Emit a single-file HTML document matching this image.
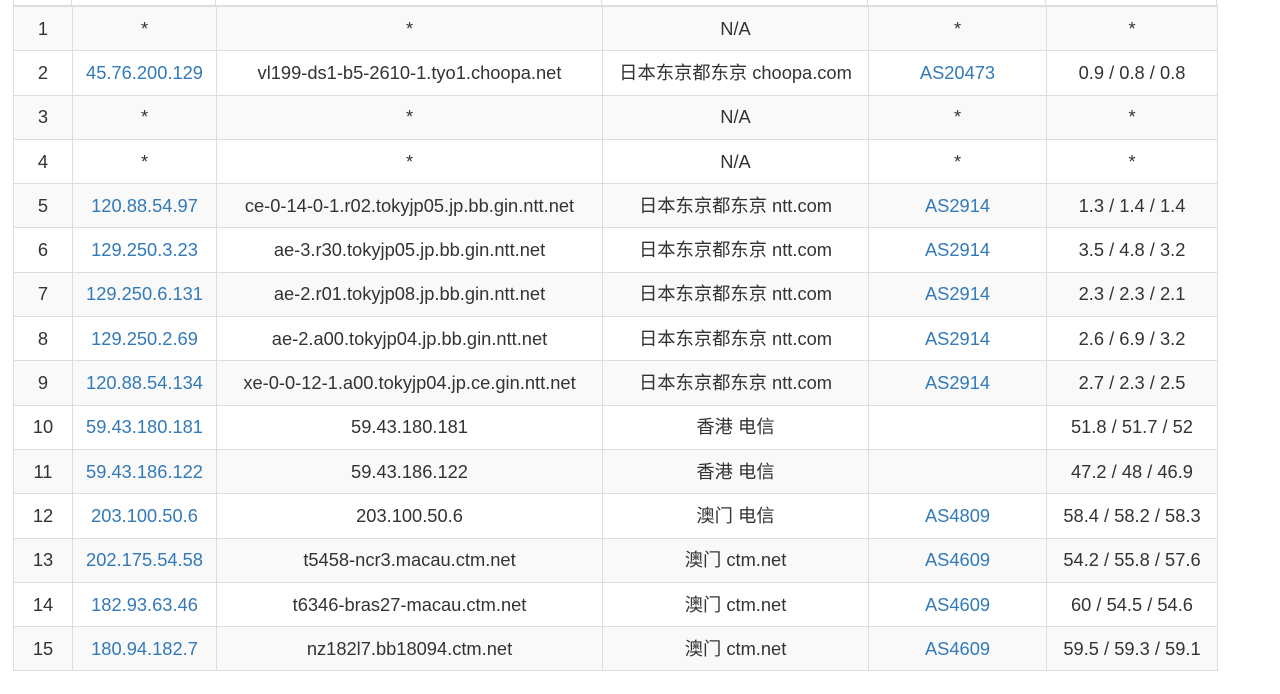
<!DOCTYPE html>
<html><head><meta charset="utf-8"><style>
html,body{margin:0;padding:0;background:#fff;width:1280px;height:694px;overflow:hidden}
table{position:absolute;left:13px;top:5px;border-collapse:collapse;border-top:2px solid #ddd;font-family:"Liberation Sans","Noto Sans CJK SC",sans-serif;font-size:18.3px;color:#333}
td{border:1px solid #ddd;text-align:center;padding:0;height:43.3px;line-height:20px}
tr:nth-child(odd) td{background:#f9f9f9}
.l{color:#337ab7}
</style></head><body>
<table>
<colgroup><col style="width:59px"><col style="width:144px"><col style="width:386px"><col style="width:266px"><col style="width:178px"><col style="width:171px"></colgroup>
<tr><td>1</td><td>*</td><td>*</td><td>N/A</td><td>*</td><td>*</td></tr>
<tr><td>2</td><td class="l">45.76.200.129</td><td>vl199-ds1-b5-2610-1.tyo1.choopa.net</td><td>日本东京都东京 choopa.com</td><td class="l">AS20473</td><td>0.9 / 0.8 / 0.8</td></tr>
<tr><td>3</td><td>*</td><td>*</td><td>N/A</td><td>*</td><td>*</td></tr>
<tr><td>4</td><td>*</td><td>*</td><td>N/A</td><td>*</td><td>*</td></tr>
<tr><td>5</td><td class="l">120.88.54.97</td><td>ce-0-14-0-1.r02.tokyjp05.jp.bb.gin.ntt.net</td><td>日本东京都东京 ntt.com</td><td class="l">AS2914</td><td>1.3 / 1.4 / 1.4</td></tr>
<tr><td>6</td><td class="l">129.250.3.23</td><td>ae-3.r30.tokyjp05.jp.bb.gin.ntt.net</td><td>日本东京都东京 ntt.com</td><td class="l">AS2914</td><td>3.5 / 4.8 / 3.2</td></tr>
<tr><td>7</td><td class="l">129.250.6.131</td><td>ae-2.r01.tokyjp08.jp.bb.gin.ntt.net</td><td>日本东京都东京 ntt.com</td><td class="l">AS2914</td><td>2.3 / 2.3 / 2.1</td></tr>
<tr><td>8</td><td class="l">129.250.2.69</td><td>ae-2.a00.tokyjp04.jp.bb.gin.ntt.net</td><td>日本东京都东京 ntt.com</td><td class="l">AS2914</td><td>2.6 / 6.9 / 3.2</td></tr>
<tr><td>9</td><td class="l">120.88.54.134</td><td>xe-0-0-12-1.a00.tokyjp04.jp.ce.gin.ntt.net</td><td>日本东京都东京 ntt.com</td><td class="l">AS2914</td><td>2.7 / 2.3 / 2.5</td></tr>
<tr><td>10</td><td class="l">59.43.180.181</td><td>59.43.180.181</td><td>香港 电信</td><td></td><td>51.8 / 51.7 / 52</td></tr>
<tr><td>11</td><td class="l">59.43.186.122</td><td>59.43.186.122</td><td>香港 电信</td><td></td><td>47.2 / 48 / 46.9</td></tr>
<tr><td>12</td><td class="l">203.100.50.6</td><td>203.100.50.6</td><td>澳门 电信</td><td class="l">AS4809</td><td>58.4 / 58.2 / 58.3</td></tr>
<tr><td>13</td><td class="l">202.175.54.58</td><td>t5458-ncr3.macau.ctm.net</td><td>澳门 ctm.net</td><td class="l">AS4609</td><td>54.2 / 55.8 / 57.6</td></tr>
<tr><td>14</td><td class="l">182.93.63.46</td><td>t6346-bras27-macau.ctm.net</td><td>澳门 ctm.net</td><td class="l">AS4609</td><td>60 / 54.5 / 54.6</td></tr>
<tr><td>15</td><td class="l">180.94.182.7</td><td>nz182l7.bb18094.ctm.net</td><td>澳门 ctm.net</td><td class="l">AS4609</td><td>59.5 / 59.3 / 59.1</td></tr>
</table>
<div style="position:absolute;left:13px;top:0;width:1204px;height:5px">
<div style="position:absolute;left:58px;top:0;width:1px;height:5px;background:#ddd"></div>
<div style="position:absolute;left:202px;top:0;width:1px;height:5px;background:#ddd"></div>
<div style="position:absolute;left:588px;top:0;width:1px;height:5px;background:#ddd"></div>
<div style="position:absolute;left:854px;top:0;width:1px;height:5px;background:#ddd"></div>
<div style="position:absolute;left:1032px;top:0;width:1px;height:5px;background:#ddd"></div>
<div style="position:absolute;left:0;top:0;width:1px;height:5px;background:#ddd"></div>
<div style="position:absolute;left:1203px;top:0;width:1px;height:5px;background:#ddd"></div>
</div>
</body></html>
